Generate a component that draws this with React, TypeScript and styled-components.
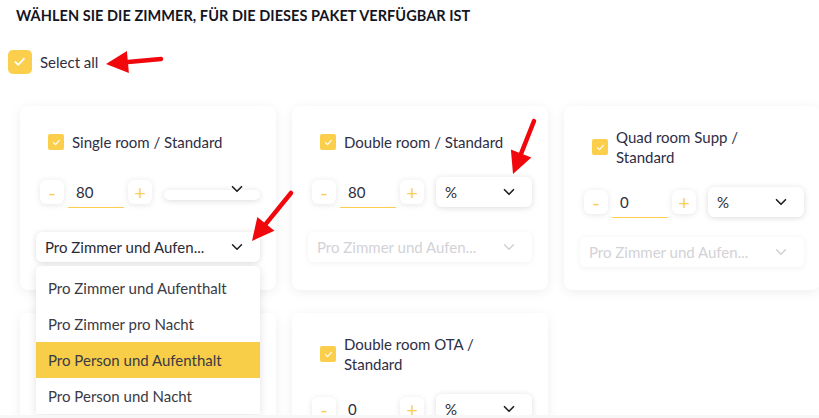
import React from "react";
import styled, { createGlobalStyle } from "styled-components";
import { ChevronDown } from "lucide-react";

const GlobalStyle = createGlobalStyle`
  html, body {
    margin: 0;
    padding: 0;
    background: #f7f7f7;
    overflow: hidden;
  }
  body {
    font-family: Lato, "Liberation Sans", sans-serif;
    color: #2e2e3f;
  }
`;

const Page = styled.div`
  position: relative;
  height: 415px;
  width: 819px;
  background: #ffffff;
  overflow: hidden;
  padding: 7px 0 0 8px;
  box-sizing: border-box;
`;

const Title = styled.h1`
  margin: 0 0 0 8px;
  font-size: 14.5px;
  font-weight: 700;
  color: #15151f;
  letter-spacing: 0.05px;
  line-height: 18px;
`;

const SelectAllRow = styled.label`
  display: flex;
  align-items: center;
  gap: 8px;
  margin-top: 25px;
  font-size: 15px;
  color: #2e2e45;
`;

const Box = styled.span<{ $size: number }>`
  display: inline-flex;
  align-items: center;
  justify-content: center;
  width: ${(p) => p.$size}px;
  height: ${(p) => p.$size}px;
  flex-shrink: 0;
  border-radius: ${(p) => (p.$size > 20 ? 5 : 2)}px;
  background: #fbcf4b;
`;

const Grid = styled.div`
  display: grid;
  grid-template-columns: repeat(3, 256px);
  column-gap: 16px;
  row-gap: 23px;
  margin: 32px 0 0 12px;
`;

const Card = styled.div`
  position: relative;
  height: 184px;
  box-sizing: border-box;
  padding: 4px 16px 4px 16px;
  background: #fff;
  border-radius: 8px;
  box-shadow: 0 2px 12px rgba(0, 0, 0, 0.07);
  display: flex;
  flex-direction: column;
  justify-content: space-evenly;
`;

const RoomRow = styled.div`
  display: flex;
  align-items: center;
  gap: 8px;
  padding-left: 12px;
  margin-top: -2px;
`;

const RoomName = styled.span`
  max-width: 170px;
  font-size: 15px;
  line-height: 20px;
  color: #2e2e45;
`;

const StepperRow = styled.div`
  display: flex;
  align-items: center;
  padding-left: 4px;
`;

const StepButton = styled.button`
  width: 24px;
  height: 24px;
  margin-right: 4px;
  border: none;
  border-radius: 6px;
  background: #fff;
  box-shadow: 0 1px 6px rgba(0, 0, 0, 0.1);
  color: #fbcf4b;
  font-family: Lato, sans-serif;
  font-size: 20px;
  line-height: 24px;
  padding: 0;
  display: flex;
  align-items: center;
  justify-content: center;
`;

const Amount = styled.div`
  width: 56px;
  height: 27px;
  margin-right: 4px;
  margin-top: 4px;
  box-sizing: border-box;
  padding-left: 8px;
  border-bottom: 1px solid #fbcf4b;
  font-size: 15px;
  line-height: 22px;
  color: #2e2e3a;
`;

const Select = styled.div<{ $wide?: boolean; $muted?: boolean; $flat?: boolean }>`
  display: flex;
  align-items: ${(p) => (p.$flat ? "flex-start" : "center")};
  justify-content: space-between;
  box-sizing: border-box;
  width: ${(p) => (p.$wide ? "224px" : "96px")};
  height: ${(p) => (p.$flat ? "10px" : "30px")};
  margin-left: ${(p) => (p.$wide ? "0" : "8px")};
  margin-top: ${(p) => (p.$flat ? "6px" : "0")};
  padding: 0 14px 0 9px;
  background: #fff;
  border-radius: 6px;
  box-shadow: 0 1px 6px rgba(0, 0, 0, ${(p) => (p.$muted ? 0.06 : 0.14)});
  font-size: 15px;
  color: ${(p) => (p.$muted ? "#d2d2d6" : "#2a2a33")};

  svg {
    color: ${(p) => (p.$muted ? "#d2d2d6" : "#1e1e24")};
    margin-top: ${(p) => (p.$flat ? "-10px" : "0")};
    flex-shrink: 0;
  }
`;

const Menu = styled.ul`
  position: absolute;
  left: 16px;
  top: 160px;
  z-index: 2;
  width: 224px;
  margin: 0;
  padding: 4px 0 0;
  list-style: none;
  background: #fff;
  border-radius: 6px 6px 0 0;
  box-shadow: 0 2px 10px rgba(0, 0, 0, 0.12);
`;

const MenuItem = styled.li<{ $active?: boolean }>`
  height: 36px;
  line-height: 36px;
  padding-left: 12px;
  font-size: 15px;
  color: #3a3a44;
  background: ${(p) => (p.$active ? "#f8cd48" : "transparent")};
`;

const Arrows = styled.svg`
  position: absolute;
  left: 0;
  top: 0;
  z-index: 5;
  pointer-events: none;
`;

const Check = ({ size }: { size: number }) => (
  <Box $size={size}>
    <svg width={size * 0.55} height={size * 0.55} viewBox="0 0 12 12">
      <path d="M2 6.3 L4.8 9 L10 3.3" fill="none" stroke="#fff" strokeWidth="1.6" strokeLinecap="round" strokeLinejoin="round" />
    </svg>
  </Box>
);

type Room = {
  name: string;
  amount: string;
  unit: string;
  mode: "open" | "muted";
  flatUnit?: boolean;
};

// the fourth card sits under the open menu, so it is drawn empty
const rooms: (Room | "hidden" | null)[] = [
  { name: "Single room / Standard", amount: "80", unit: "", mode: "open", flatUnit: true },
  { name: "Double room / Standard", amount: "80", unit: "%", mode: "muted" },
  { name: "Quad room Supp / Standard", amount: "0", unit: "%", mode: "muted" },
  "hidden",
  { name: "Double room OTA / Standard", amount: "0", unit: "%", mode: "muted" },
];

const options = [
  "Pro Zimmer und Aufenthalt",
  "Pro Zimmer pro Nacht",
  "Pro Person und Aufenthalt",
  "Pro Person und Nacht",
];

const RoomCard = ({ room }: { room: Room }) => (
  <Card>
    <RoomRow>
      <Check size={16} />
      <RoomName>{room.name}</RoomName>
    </RoomRow>
    <StepperRow>
      <StepButton>-</StepButton>
      <Amount>{room.amount}</Amount>
      <StepButton>+</StepButton>
      <Select $flat={room.flatUnit}>
        <span>{room.unit}</span>
        <ChevronDown size={18} strokeWidth={2.2} />
      </Select>
    </StepperRow>
    <Select $wide $muted={room.mode === "muted"}>
      <span>Pro Zimmer und Aufen...</span>
      <ChevronDown size={18} strokeWidth={2} />
    </Select>
    {room.mode === "open" && (
      <Menu>
        {options.map((o, i) => (
          <MenuItem key={o} $active={i === 2}>
            {o}
          </MenuItem>
        ))}
      </Menu>
    )}
  </Card>
);

const Arrow = ({ x1, y1, x2, y2 }: { x1: number; y1: number; x2: number; y2: number }) => {
  const a = Math.atan2(y2 - y1, x2 - x1);
  const len = 22;
  const w = 11;
  const bx = x2 - Math.cos(a) * len;
  const by = y2 - Math.sin(a) * len;
  const px = -Math.sin(a) * w;
  const py = Math.cos(a) * w;
  return (
    <g>
      <line x1={x1} y1={y1} x2={bx} y2={by} stroke="#f0080c" strokeWidth="4.5" strokeLinecap="round" />
      <polygon points={`${x2},${y2} ${bx + px},${by + py} ${bx - px},${by - py}`} fill="#f0080c" />
    </g>
  );
};

export default function App() {
  return (
    <>
      <GlobalStyle />
      <Page>
        <Title>WÄHLEN SIE DIE ZIMMER, FÜR DIE DIESES PAKET VERFÜGBAR IST</Title>
        <SelectAllRow>
          <Check size={24} />
          Select all
        </SelectAllRow>
        <Grid>
          {rooms.map((r, i) =>
            r === "hidden" ? <Card key={i} /> : r ? <RoomCard key={i} room={r} /> : <div key={i} />
          )}
        </Grid>
        <Arrows width="819" height="418">
          <Arrow x1={161} y1={59} x2={106} y2={64} />
          <Arrow x1={534} y1={121} x2={513} y2={174} />
          <Arrow x1={291} y1={193} x2={252} y2={241} />
        </Arrows>
      </Page>
    </>
  );
}
